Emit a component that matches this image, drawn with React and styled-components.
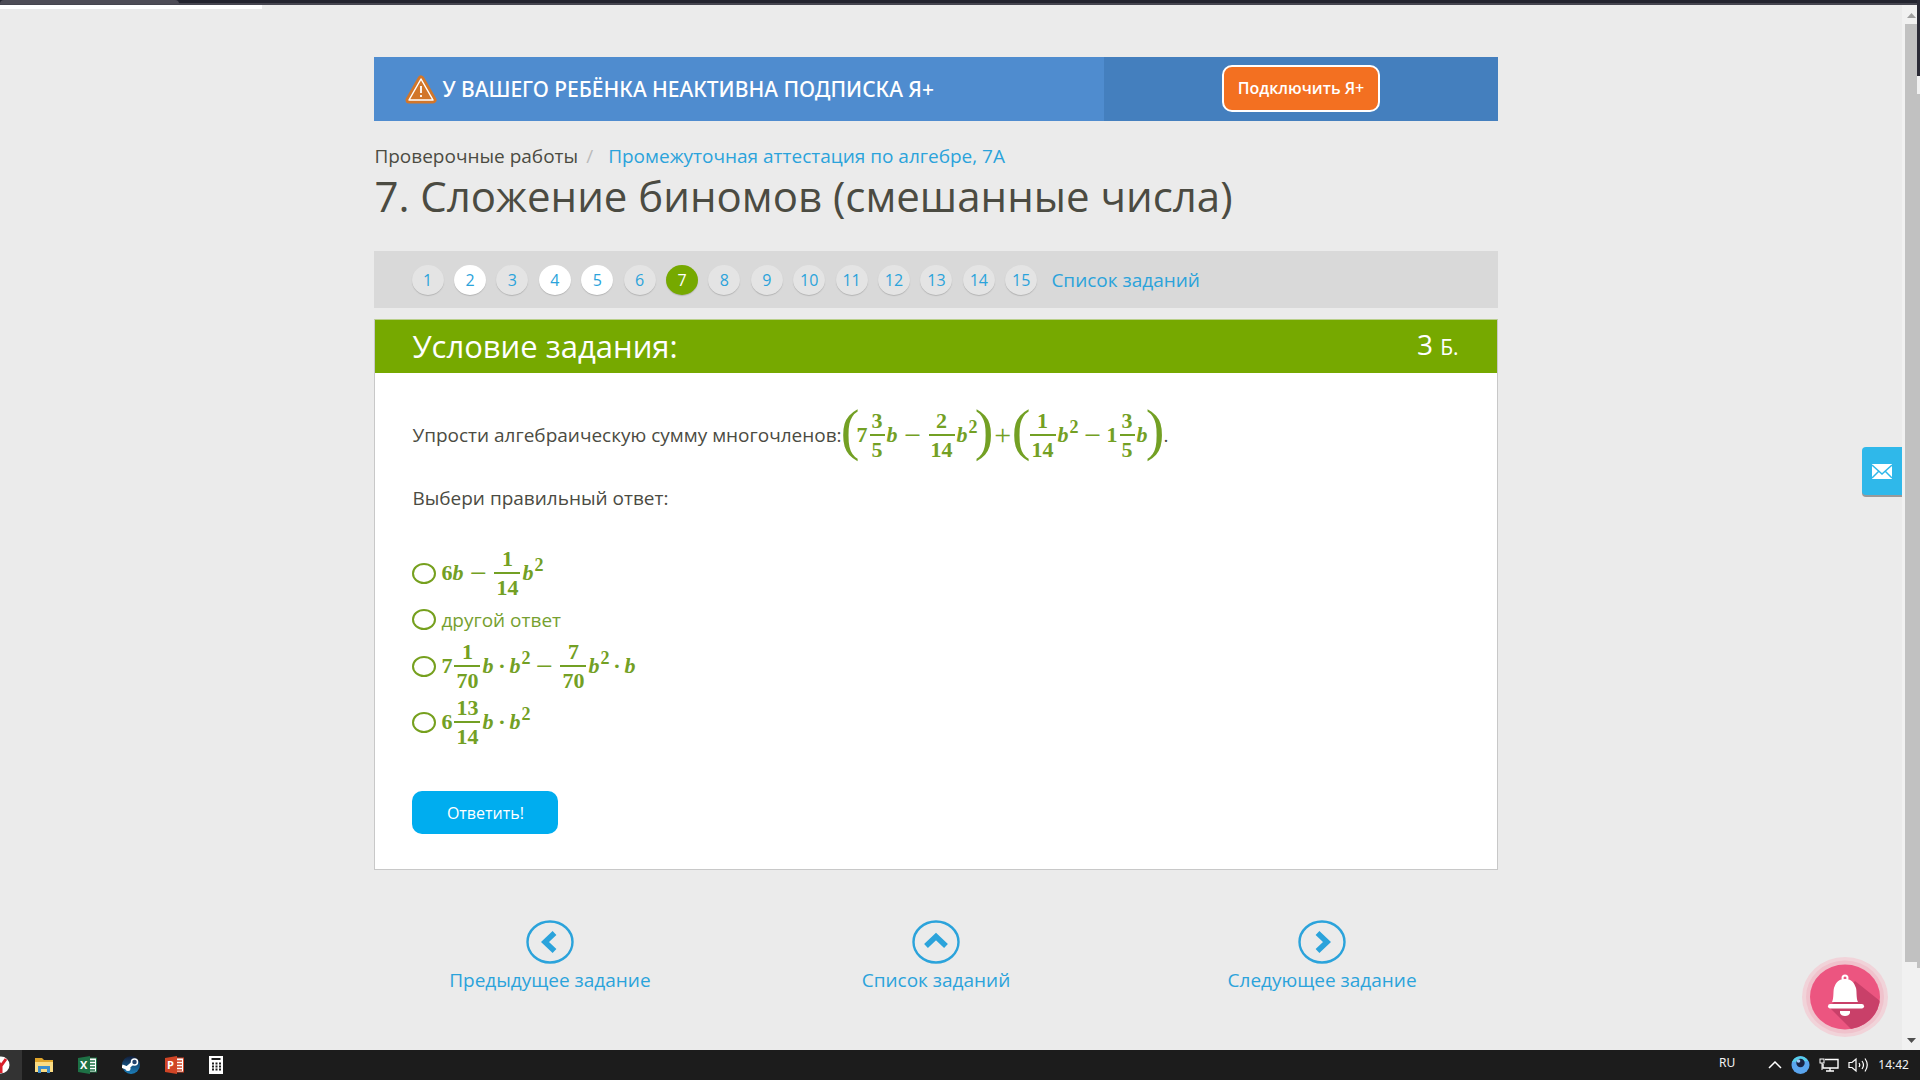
import React, { useState } from 'react'
import styled, { createGlobalStyle } from 'styled-components'

const GlobalStyle = createGlobalStyle`
  * {
    box-sizing: border-box;
  }

  body {
    margin: 0;
    background-color: #ebebeb;
    color: #4b4b42;
    font-family: 'Open Sans', 'Noto Sans', sans-serif;
    font-size: 19px;
    line-height: 24px;
  }

  a {
    color: #2ba3db;
    text-decoration: none;
  }

  button {
    font-family: inherit;
    cursor: pointer;
  }
`

const Screen = styled.div`
  display: flex;
  flex-direction: column;
  min-height: 100vh;
`

const Desktop = styled.div`
  display: flex;
  flex: 1;
`

const Browser = styled.div`
  display: flex;
  flex: 1;
  flex-direction: column;
`

const TabStrip = styled.div`
  height: 5px;
  background-color: #23242f;
  border-bottom: 2px solid #45454f;

  span {
    display: block;
    width: 179px;
    height: 4px;
    background-color: #4d4c56;
    border-radius: 4px 4px 0 0;
  }
`

const Viewport = styled.div`
  position: relative;
  display: flex;
  flex: 1;
`

const Page = styled.div`
  flex: 1;
`

const LoadBar = styled.div`
  width: 262px;
  height: 4px;
  background-color: #ffffff;
`

const PageInner = styled.div`
  padding-right: 30px;
`

const Container = styled.div`
  width: 60%;
  min-width: 900px;
  max-width: 1124px;
  margin: 48px auto 0;
`

const Banner = styled.div`
  display: flex;
  height: 64px;
  background-color: #4f8ccf;
  color: #ffffff;
`

const BannerText = styled.div`
  display: flex;
  flex: 0 0 65%;
  align-items: center;
  gap: 5px;
  padding-left: 31px;
  font-family: 'Noto Sans', 'Open Sans', sans-serif;
  font-size: 21px;
  font-weight: 500;
  white-space: nowrap;
`

const BannerAction = styled.div`
  display: flex;
  flex: 1;
  align-items: center;
  justify-content: center;
  padding-bottom: 2px;
  background-color: #447fbe;
`

const SubscribeButton = styled.button`
  width: 158px;
  height: 47px;
  padding: 0;
  border: 2px solid #ffffff;
  border-radius: 10px;
  background-color: #f37021;
  color: #ffffff;
  font-size: 16px;
  font-weight: 600;
`

const Breadcrumb = styled.nav`
  display: flex;
  margin-top: 22px;
  line-height: 26px;

  a:first-child {
    color: #4b4b42;
  }

  span {
    width: 30px;
    padding-left: 8px;
    color: #bbbbbb;
  }
`

const Title = styled.h1`
  margin: 0;
  font-size: 42px;
  font-weight: 400;
  line-height: 54px;
`

const TaskBar = styled.nav`
  display: flex;
  align-items: center;
  height: 57px;
  margin: 28px 0 11px;
  padding-left: 32px;
  background-color: #d9d9d9;

  ol {
    display: grid;
    grid-template-columns: repeat(15, 1fr);
    justify-items: center;
    width: 636px;
    margin: 0;
    padding: 0;
    list-style: none;
  }

  > a {
    padding-left: 9px;
  }
`

const colors = {
  idle: '#e4e4e4',
  seen: '#ffffff',
  current: '#76a900'
}

const Pill = styled.a`
  display: block;
  width: 32px;
  height: 30px;
  border-radius: 50%;
  background-color: ${props => colors[props.$state]};
  color: ${props => (props.$state === 'current' ? '#ffffff' : '#2ba3db')};
  box-shadow: 0 1px 1px #b5b5b5;
  font-size: 16px;
  line-height: 30px;
  text-align: center;
`

const Card = styled.section`
  border: 1px solid #c8c8c8;
  border-top-color: #b9cf8a;
  background-color: #ffffff;
`

const CardHeader = styled.header`
  display: flex;
  align-items: center;
  justify-content: space-between;
  height: 53px;
  padding: 0 38px 2px 37px;
  background-color: #76a900;
  color: #ffffff;

  h2 {
    margin: 0;
    font-size: 31px;
    font-weight: 400;
  }
`

const Points = styled.span`
  font-size: 28px;

  small {
    font-size: 21px;
  }
`

const CardBody = styled.form`
  padding: 31px 37px 35px;
`

const Question = styled.div`
  display: flex;
  align-items: center;
  gap: 2px;
  height: 62px;
`

const Answers = styled.fieldset`
  margin: 20px 0 0;
  padding: 0;
  border: 0;

  legend {
    margin-bottom: 35px;
    padding: 0;
  }
`

const Answer = styled.label`
  display: flex;
  align-items: center;
  gap: 5px;
  height: ${props => (props.$short ? '37px' : '56px')};
  color: #76a030;
`

const Radio = styled.input`
  width: 24px;
  height: 21px;
  margin: 0;
  border: 2px solid #76a01e;
  border-radius: 50%;
  appearance: none;

  &:checked {
    background-color: #76a900;
    box-shadow: inset 0 0 0 3px #ffffff;
  }
`

const AnswerButton = styled.button`
  width: 146px;
  height: 43px;
  margin-top: 41px;
  padding: 0;
  border: 0;
  border-radius: 10px;
  background-color: #00adef;
  color: #ffffff;
  font-size: 16px;
`

const Math = styled.span`
  display: inline-flex;
  align-items: center;
  color: #73a024;
  font-family: 'Liberation Serif', serif;
  font-size: 22px;
  font-weight: 700;
  line-height: 24px;

  i {
    padding-right: 1px;
  }
`

const Fraction = styled.span`
  display: inline-flex;
  flex-direction: column;
  margin: 0 2px;
  text-align: center;
  line-height: 27px;

  span:first-child {
    border-bottom: 2px solid #73a024;
  }

  span {
    padding: 0 2px;
  }
`

const Sup = styled.span`
  padding-bottom: 16px;
  font-size: 18px;
`

const Operator = styled.span`
  width: ${props => (props.$tight ? '24px' : '28px')};
  font-weight: 400;
  font-size: 30px;
  text-align: center;
`

const Dot = styled.span`
  width: 15px;
  text-align: center;
`

const Paren = styled.span`
  display: flex;
  justify-content: center;
  width: 13px;
  padding-bottom: 10px;
  font-size: 56px;
  font-weight: 400;
  line-height: 56px;
`

const Pager = styled.nav`
  display: grid;
  grid-template-columns: 351px 1fr 351px;
  margin-top: 50px;

  a {
    display: flex;
    flex-direction: column;
    align-items: center;
    gap: 4px;
  }
`

const MailTab = styled.button`
  position: absolute;
  top: 442px;
  right: 15px;
  display: flex;
  align-items: center;
  justify-content: center;
  width: 40px;
  height: 48px;
  padding: 0;
  border: 0;
  border-radius: 4px 0 0 4px;
  background-color: #2fb8ea;
  box-shadow: 0 2px 0 #999999;
`

const BellButton = styled.button`
  position: absolute;
  right: 28px;
  bottom: 12px;
  width: 88px;
  height: 82px;
  padding: 0;
  border: 0;
  background: none;
`

const Scrollbar = styled.div`
  display: flex;
  flex-direction: column;
  align-items: center;
  width: 15px;
  padding: 8px 0 6px 3px;
  background-color: #f1f1f1;

  svg {
    flex: none;
  }
`

const Thumb = styled.div`
  width: 12px;
  height: 938px;
  margin: 5px 0 auto;
  background-color: #c1c1c1;
`

const WindowEdge = styled.div`
  display: flex;
  flex-direction: column;
  width: 3px;
  background-color: #f1f1f1;

  span {
    height: 76px;
    background-color: #2b2b36;
  }

  i {
    height: 874px;
    margin-top: 18px;
    background-color: #c1c1c1;
  }
`

const SystemBar = styled.footer`
  display: flex;
  justify-content: space-between;
  height: 30px;
  background-color: #1c1c1c;
  color: #f2f2f2;
`

const Apps = styled.div`
  display: flex;
  gap: 25px;

  button {
    display: flex;
    align-items: center;
    height: 30px;
    padding: 0;
    border: 0;
    background: none;
  }

  button:first-child {
    width: 22px;
    margin-right: -12px;
    background-color: #333333;
  }
`

const Tray = styled.div`
  display: flex;
  align-items: center;
  gap: 9px;
  padding-right: 11px;
  font-family: 'Noto Sans', sans-serif;
  font-size: 12px;

  svg {
    flex: none;
  }
`

const Language = styled.span`
  padding: 0 24px 4px 0;
`

const b = <i>b</i>
const b2 = <>{b}<Sup>2</Sup></>

const Frac = ({ top, bottom }) => (
  <Fraction>
    <span>{top}</span>
    <span>{bottom}</span>
  </Fraction>
)

const answers = [
  {
    id: 'a1',
    content: <Math>6{b}<Operator>−</Operator><Frac top="1" bottom="14" />{b2}</Math>
  },
  { id: 'a2', short: true, content: 'другой ответ' },
  {
    id: 'a3',
    content: (
      <Math>
        7<Frac top="1" bottom="70" />{b}<Dot>·</Dot>{b2}<Operator>−</Operator>
        <Frac top="7" bottom="70" />{b2}<Dot>·</Dot>{b}
      </Math>
    )
  },
  {
    id: 'a4',
    content: <Math>6<Frac top="13" bottom="14" />{b}<Dot>·</Dot>{b2}</Math>
  }
]

const stateOf = number => {
  if (number === 7) return 'current'
  return [2, 4, 5].includes(number) ? 'seen' : 'idle'
}

const chevrons = {
  left: 'M28.500 13 L19 22 L28.500 31',
  up: 'M14 26 L24 16.500 L34 26',
  right: 'M19.500 13 L29 22 L19.500 31'
}

const CircleArrow = ({ direction }) => (
  <svg width="48" height="44" viewBox="0 0 48 44" fill="none" stroke="#2ba3db">
    <ellipse cx="24" cy="22" rx="22.500" ry="20.500" strokeWidth="2.400" />
    <path d={chevrons[direction]} strokeWidth="5.500" />
  </svg>
)

const WarningIcon = () => (
  <svg width="32" height="30" viewBox="0 0 32 30">
    <path d="M16 5 L28 26 H4 Z" fill="#d2762a" stroke="#d2762a" strokeWidth="7" strokeLinejoin="round" />
    <path d="M16 5 L28 26 H4 Z" fill="none" stroke="#ffffff" strokeWidth="1.500" strokeLinejoin="round" />
    <path d="M16 12 V19 M16 21 V23" stroke="#ffffff" strokeWidth="1.800" />
  </svg>
)

const BellIcon = () => (
  <svg width="88" height="82" viewBox="0 0 88 82">
    <defs>
      <clipPath id="disc"><ellipse cx="44" cy="41" rx="35" ry="32.500" /></clipPath>
    </defs>
    <ellipse cx="44" cy="41" rx="43" ry="40" fill="#f1d3d9" />
    <ellipse cx="44" cy="41" rx="39" ry="36.500" fill="#f0c2cc" />
    <g clipPath="url(#disc)">
      <rect width="88" height="82" fill="#ec5580" />
      <path d="M28 51 L50 73 L84 73 L84 49 L54 25 Z" fill="#c94069" />
    </g>
    <circle cx="44" cy="22" r="2.500" fill="none" stroke="#ffffff" strokeWidth="2" />
    <path d="M31 46 C33 42 32 36 33 32 C35 26 38 23 44 23 C50 23 53 26 55 32 C56 36 55 42 57 46 Z" fill="#ffffff" />
    <rect x="27" y="48" width="36" height="4.500" rx="2.200" fill="#ffffff" />
    <path d="M39 55 H49 V57 Q48 60 44 60 Q40 60 39 57 Z" fill="#ffffff" />
  </svg>
)

const MailIcon = () => (
  <svg width="20" height="15" viewBox="0 0 20 15">
    <rect width="20" height="15" fill="#ffffff" />
    <path d="M0 1 L10 10 L20 1 M0 14 L7 7 M20 14 L13 7" fill="none" stroke="#2fb8ea" strokeWidth="1.500" />
  </svg>
)

const YandexIcon = () => (
  <svg width="10" height="18" viewBox="0 0 10 18">
    <circle cx="1" cy="9" r="8.500" fill="#ffffff" />
    <path d="M6 3 L1 10 V17 M1 10 L-3 4" fill="none" stroke="#d91f2b" strokeWidth="3" />
  </svg>
)

const FolderIcon = () => (
  <svg width="18" height="16" viewBox="0 0 18 16">
    <path d="M0 1 H7 L9 3 H18 V15 H0 Z" fill="#e0a52b" />
    <path d="M0 5 H18 V15 H0 Z" fill="#fbdc83" />
    <path d="M3 9 H15 V16 H12 V12 H6 V16 H3 Z" fill="#3d8fcd" />
  </svg>
)

const OfficeIcon = ({ color, letter }) => (
  <svg width="19" height="18" viewBox="0 0 19 18">
    <rect x="9" y="2" width="9.500" height="14" fill="#ffffff" stroke={color} />
    <path d="M12 5 H17 M12 8 H17 M12 11 H17 M12 14 H17" stroke={color} strokeWidth="1.500" />
    <path d="M0 2 L12 0 V18 L0 16 Z" fill={color} />
    <text x="2" y="13" fill="#ffffff" fontFamily="Open Sans" fontSize="11" fontWeight="700">{letter}</text>
  </svg>
)

const SteamIcon = () => (
  <svg width="18" height="18" viewBox="0 0 18 18">
    <defs>
      <linearGradient id="steam" x2="0" y2="1">
        <stop stopColor="#111d3a" />
        <stop offset="1" stopColor="#1b7fbb" />
      </linearGradient>
    </defs>
    <circle cx="9" cy="9" r="9" fill="url(#steam)" />
    <path d="M0 10 L5 12 L12 6" fill="none" stroke="#ffffff" strokeWidth="3.500" />
    <circle cx="12.500" cy="6" r="3" fill="#23436d" stroke="#ffffff" strokeWidth="1.500" />
    <circle cx="6" cy="12.500" r="2.500" fill="#ffffff" />
  </svg>
)

const CalculatorIcon = () => (
  <svg width="14" height="18" viewBox="0 0 14 18">
    <rect width="14" height="18" fill="#ffffff" />
    <path d="M2.500 3 H11.500" stroke="#1c1c1c" strokeWidth="2" />
    <path d="M3 7.500 H12 M3 10.500 H12 M3 13.500 H12" stroke="#1c1c1c" strokeWidth="1.800" strokeDasharray="2 1.500" />
  </svg>
)

const apps = [
  { name: 'Браузер', icon: <YandexIcon /> },
  { name: 'Проводник', icon: <FolderIcon /> },
  { name: 'Excel', icon: <OfficeIcon color="#1e7145" letter="X" /> },
  { name: 'Steam', icon: <SteamIcon /> },
  { name: 'PowerPoint', icon: <OfficeIcon color="#d04526" letter="P" /> },
  { name: 'Калькулятор', icon: <CalculatorIcon /> }
]

const TrayIcons = () => (
  <>
    <svg width="14" height="8" viewBox="0 0 14 8">
      <path d="M1 7 L7 1 L13 7" fill="none" stroke="#ffffff" strokeWidth="1.500" />
    </svg>
    <svg width="19" height="18" viewBox="0 0 19 18">
      <circle cx="9.500" cy="9" r="9" fill="#5aa5ee" />
      <path d="M1 6 A9 9 0 0 1 17 5 Z" fill="#56d0ea" />
      <circle cx="9.500" cy="7" r="4.200" fill="#182242" />
      <circle cx="7.500" cy="5" r="1.800" fill="#a5c8f7" />
    </svg>
    <svg width="20" height="14" viewBox="0 0 20 14" fill="none" stroke="#ffffff">
      <path d="M6 1.500 H19 V10 H4 V6 M11 10 V13 M7 13 H15" strokeWidth="1.400" />
      <rect x="1" y="1" width="4" height="4" />
      <path d="M3 5 V12" />
    </svg>
    <svg width="21" height="16" viewBox="0 0 21 16" fill="none" stroke="#ffffff">
      <path d="M1 5.500 H4 L8 2 V14 L4 10.500 H1 Z" strokeWidth="1.200" />
      <path d="M11 6 Q12.500 8 11 10 M14 4 Q17 8 14 12 M17 1.500 Q21.500 8 17 14.500" strokeWidth="1.200" />
    </svg>
  </>
)

const App = () => {
  const [answer, setAnswer] = useState(null)

  return (
    <Screen>
      <GlobalStyle />
      <Desktop>
        <Browser>
          <TabStrip><span /></TabStrip>
          <Viewport>
            <Page>
              <LoadBar />
              <PageInner>
                <Container>
                  <Banner>
                    <BannerText>
                      <WarningIcon />
                      У ВАШЕГО РЕБЁНКА НЕАКТИВНА ПОДПИСКА Я+
                    </BannerText>
                    <BannerAction>
                      <SubscribeButton type="button">Подключить Я+</SubscribeButton>
                    </BannerAction>
                  </Banner>

                  <Breadcrumb>
                    <a href="#works">Проверочные работы</a>
                    <span>/</span>
                    <a href="#test">Промежуточная аттестация по алгебре, 7А</a>
                  </Breadcrumb>
                  <Title>7. Сложение биномов (смешанные числа)</Title>

                  <TaskBar>
                    <ol>
                      {Array.from({ length: 15 }, (_, i) => i + 1).map(number => (
                        <li key={number}>
                          <Pill href={`#task-${number}`} $state={stateOf(number)}>{number}</Pill>
                        </li>
                      ))}
                    </ol>
                    <a href="#list">Список заданий</a>
                  </TaskBar>

                  <Card>
                    <CardHeader>
                      <h2>Условие задания:</h2>
                      <Points>3 <small>Б.</small></Points>
                    </CardHeader>
                    <CardBody onSubmit={e => e.preventDefault()}>
                      <Question>
                        <span>Упрости алгебраическую сумму многочленов:</span>
                        <Math>
                          <Paren>(</Paren>
                          7<Frac top="3" bottom="5" />{b}<Operator>−</Operator>
                          <Frac top="2" bottom="14" />{b2}
                          <Paren>)</Paren>
                          <Operator $tight>+</Operator>
                          <Paren>(</Paren>
                          <Frac top="1" bottom="14" />{b2}<Operator>−</Operator>
                          1<Frac top="3" bottom="5" />{b}
                          <Paren>)</Paren>
                        </Math>
                        <span>.</span>
                      </Question>
                      <Answers>
                        <legend>Выбери правильный ответ:</legend>
                        {answers.map(({ id, short, content }) => (
                          <Answer key={id} htmlFor={id} $short={short}>
                            <Radio
                              type="radio"
                              name="answer"
                              id={id}
                              checked={answer === id}
                              onChange={() => setAnswer(id)}
                            />
                            {content}
                          </Answer>
                        ))}
                      </Answers>
                      <AnswerButton type="submit">Ответить!</AnswerButton>
                    </CardBody>
                  </Card>

                  <Pager>
                    <a href="#previous"><CircleArrow direction="left" />Предыдущее задание</a>
                    <a href="#list"><CircleArrow direction="up" />Список заданий</a>
                    <a href="#next"><CircleArrow direction="right" />Следующее задание</a>
                  </Pager>
                </Container>
              </PageInner>
            </Page>

            <Scrollbar>
              <svg width="9" height="6"><path d="M0 5 L4.500 0 L9 5 Z" fill="#a0a0a0" /></svg>
              <Thumb />
              <svg width="9" height="6"><path d="M0 0 L4.500 5 L9 0 Z" fill="#505050" /></svg>
            </Scrollbar>

            <MailTab type="button" aria-label="Написать сообщение"><MailIcon /></MailTab>
            <BellButton type="button" aria-label="Уведомления"><BellIcon /></BellButton>
          </Viewport>
        </Browser>
        <WindowEdge><span /><i /></WindowEdge>
      </Desktop>

      <SystemBar>
        <Apps>
          {apps.map(({ name, icon }) => (
            <button key={name} type="button" aria-label={name}>{icon}</button>
          ))}
        </Apps>
        <Tray>
          <Language>RU</Language>
          <TrayIcons />
          <time>14:42</time>
        </Tray>
      </SystemBar>
    </Screen>
  )
}

export default App
